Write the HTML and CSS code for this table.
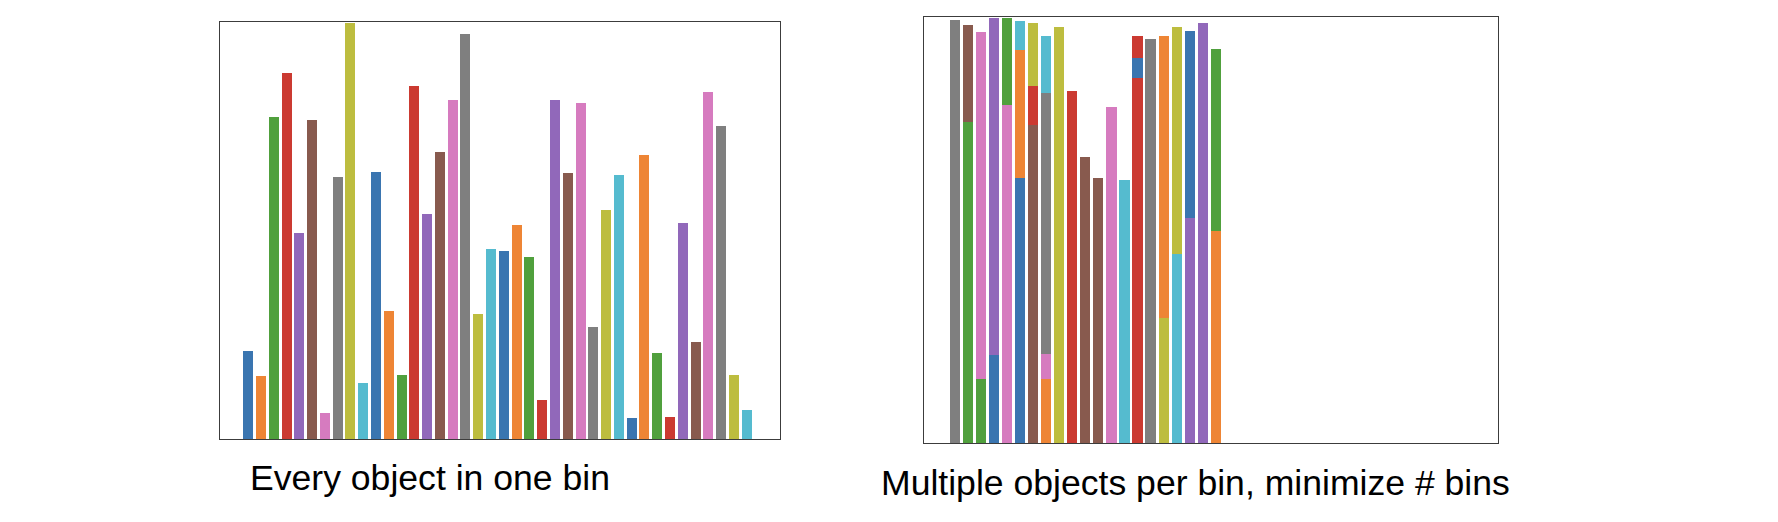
FILE: index.html
```html
<!DOCTYPE html>
<html lang="en">
<head>
<meta charset="utf-8">
<title>Bin packing</title>
<link rel="stylesheet" href="styles.css">
</head>
<body>
<main class="page">
  <figure class="panel panel-left">
    <div class="chart chart-left">
      <div class="bar blue" style="height:88px"></div>
      <div class="bar orange" style="height:63px"></div>
      <div class="bar green" style="height:322px"></div>
      <div class="bar red" style="height:366px"></div>
      <div class="bar purple" style="height:206px"></div>
      <div class="bar brown" style="height:319px"></div>
      <div class="bar pink" style="height:26px"></div>
      <div class="bar gray" style="height:262px"></div>
      <div class="bar olive" style="height:416px"></div>
      <div class="bar cyan" style="height:56px"></div>
      <div class="bar blue" style="height:267px"></div>
      <div class="bar orange" style="height:128px"></div>
      <div class="bar green" style="height:64px"></div>
      <div class="bar red" style="height:353px"></div>
      <div class="bar purple" style="height:225px"></div>
      <div class="bar brown" style="height:287px"></div>
      <div class="bar pink" style="height:339px"></div>
      <div class="bar gray" style="height:405px"></div>
      <div class="bar olive" style="height:125px"></div>
      <div class="bar cyan" style="height:190px"></div>
      <div class="bar blue" style="height:188px"></div>
      <div class="bar orange" style="height:214px"></div>
      <div class="bar green" style="height:182px"></div>
      <div class="bar red" style="height:39px"></div>
      <div class="bar purple" style="height:339px"></div>
      <div class="bar brown" style="height:266px"></div>
      <div class="bar pink" style="height:336px"></div>
      <div class="bar gray" style="height:112px"></div>
      <div class="bar olive" style="height:229px"></div>
      <div class="bar cyan" style="height:264px"></div>
      <div class="bar blue" style="height:21px"></div>
      <div class="bar orange" style="height:284px"></div>
      <div class="bar green" style="height:86px"></div>
      <div class="bar red" style="height:22px"></div>
      <div class="bar purple" style="height:216px"></div>
      <div class="bar brown" style="height:97px"></div>
      <div class="bar pink" style="height:347px"></div>
      <div class="bar gray" style="height:313px"></div>
      <div class="bar olive" style="height:64px"></div>
      <div class="bar cyan" style="height:29px"></div>
    </div>
    <figcaption class="caption caption-left">Every object in one bin</figcaption>
  </figure>

  <figure class="panel panel-right">
    <div class="chart chart-right">
      <div class="stack"><div class="seg gray" style="height:423px"></div></div>
      <div class="stack"><div class="seg brown" style="height:97px"></div><div class="seg green" style="height:321px"></div></div>
      <div class="stack"><div class="seg pink" style="height:347px"></div><div class="seg green" style="height:64px"></div></div>
      <div class="stack"><div class="seg purple" style="height:337px"></div><div class="seg blue" style="height:88px"></div></div>
      <div class="stack"><div class="seg green" style="height:87px"></div><div class="seg pink" style="height:338px"></div></div>
      <div class="stack"><div class="seg cyan" style="height:29px"></div><div class="seg orange" style="height:128px"></div><div class="seg blue" style="height:265px"></div></div>
      <div class="stack"><div class="seg olive" style="height:63px"></div><div class="seg red" style="height:39px"></div><div class="seg brown" style="height:318px"></div></div>
      <div class="stack"><div class="seg cyan" style="height:57px"></div><div class="seg gray" style="height:261px"></div><div class="seg pink" style="height:25px"></div><div class="seg orange" style="height:64px"></div></div>
      <div class="stack"><div class="seg olive" style="height:416px"></div></div>
      <div class="stack"><div class="seg red" style="height:352px"></div></div>
      <div class="stack"><div class="seg brown" style="height:286px"></div></div>
      <div class="stack"><div class="seg brown" style="height:265px"></div></div>
      <div class="stack"><div class="seg pink" style="height:336px"></div></div>
      <div class="stack"><div class="seg cyan" style="height:263px"></div></div>
      <div class="stack"><div class="seg red" style="height:22px"></div><div class="seg blue" style="height:20px"></div><div class="seg red" style="height:365px"></div></div>
      <div class="stack"><div class="seg gray" style="height:404px"></div></div>
      <div class="stack"><div class="seg orange" style="height:282px"></div><div class="seg olive" style="height:125px"></div></div>
      <div class="stack"><div class="seg olive" style="height:227px"></div><div class="seg cyan" style="height:189px"></div></div>
      <div class="stack"><div class="seg blue" style="height:187px"></div><div class="seg purple" style="height:225px"></div></div>
      <div class="stack"><div class="seg purple" style="height:420px"></div></div>
      <div class="stack"><div class="seg green" style="height:182px"></div><div class="seg orange" style="height:212px"></div></div>
    </div>
    <figcaption class="caption caption-right">Multiple objects per bin, minimize # bins</figcaption>
  </figure>
</main>
</body>
</html>
```

FILE: styles.css
```css
:root {
  --blue: #3a75b0;
  --orange: #ee8535;
  --green: #50a03d;
  --red: #cb3a31;
  --purple: #9168ba;
  --brown: #885a4e;
  --pink: #d67bbf;
  --gray: #7f7f7f;
  --olive: #bdbd3f;
  --cyan: #55bbcf;
}

* {
  box-sizing: border-box;
}

html,
body {
  margin: 0;
  padding: 0;
  background: #ffffff;
}

body {
  width: 1778px;
  height: 522px;
  overflow: hidden;
  font-family: "Liberation Sans", Arial, Helvetica, sans-serif;
  color: #000000;
}

.page {
  display: flex;
  align-items: flex-start;
  padding-left: 219px;
  gap: 142px;
}

.panel {
  margin: 0;
  display: flex;
  flex-direction: column;
}

.panel-left {
  margin-top: 21px;
}

.panel-right {
  margin-top: 16px;
}

.chart {
  display: flex;
  align-items: flex-end;
  border: 1.5px solid #3c3c3c;
  background: #ffffff;
  overflow: hidden;
}

.chart-left {
  width: 562px;
  height: 419px;
  padding-left: 23.2px;
  gap: 2.785px;
}

.chart-right {
  width: 576px;
  height: 428px;
  padding-left: 25.5px;
  gap: 2.78px;
}

.bar {
  flex: 0 0 10px;
  width: 10px;
}

.stack {
  flex: 0 0 10.3px;
  width: 10.3px;
  display: flex;
  flex-direction: column;
}

.seg {
  width: 100%;
}

.blue { background: var(--blue); }
.orange { background: var(--orange); }
.green { background: var(--green); }
.red { background: var(--red); }
.purple { background: var(--purple); }
.brown { background: var(--brown); }
.pink { background: var(--pink); }
.gray { background: var(--gray); }
.olive { background: var(--olive); }
.cyan { background: var(--cyan); }

.caption {
  font-size: 35.6px;
  line-height: 1;
  white-space: nowrap;
  margin-bottom: 0;
}

.caption-left {
  margin-top: 21px;
  margin-left: 31px;
}

.caption-right {
  margin-top: 21.5px;
  margin-left: -42px;
}
```
